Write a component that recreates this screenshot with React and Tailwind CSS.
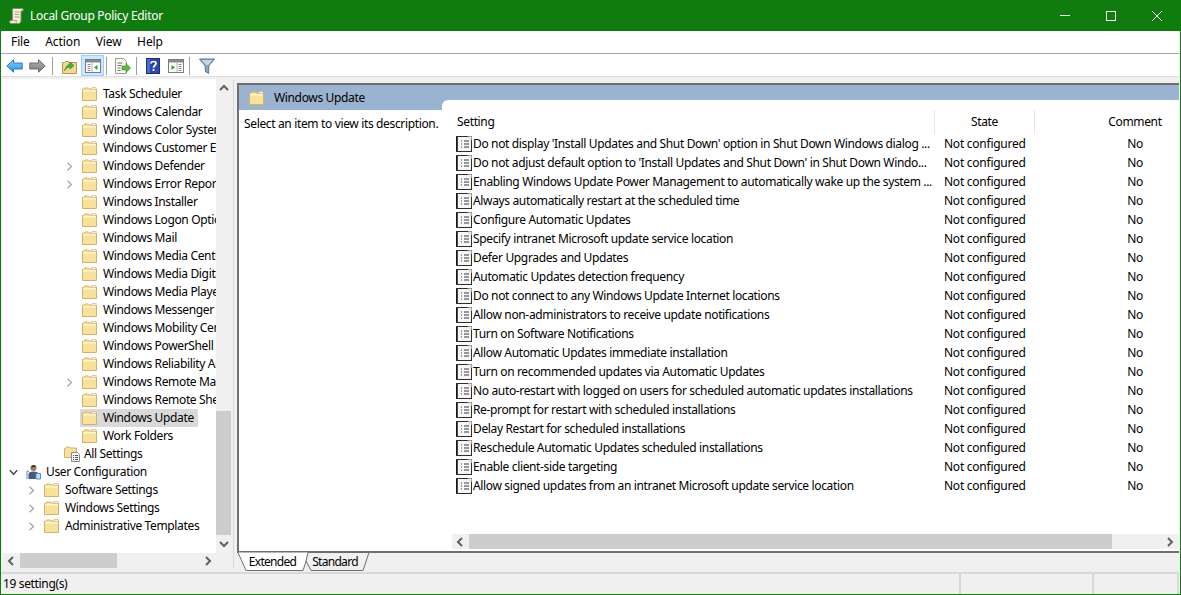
const treeRows = [
  { label: 'Task Scheduler', indent: 'pl-[61px]' },
  { label: 'Windows Calendar', indent: 'pl-[61px]' },
  { label: 'Windows Color System', indent: 'pl-[61px]' },
  { label: 'Windows Customer Experience', indent: 'pl-[61px]' },
  { label: 'Windows Defender', indent: 'pl-[61px]', chevron: 'right' },
  { label: 'Windows Error Reporting', indent: 'pl-[61px]', chevron: 'right' },
  { label: 'Windows Installer', indent: 'pl-[61px]' },
  { label: 'Windows Logon Options', indent: 'pl-[61px]' },
  { label: 'Windows Mail', indent: 'pl-[61px]' },
  { label: 'Windows Media Center', indent: 'pl-[61px]' },
  { label: 'Windows Media Digital', indent: 'pl-[61px]' },
  { label: 'Windows Media Player', indent: 'pl-[61px]' },
  { label: 'Windows Messenger', indent: 'pl-[61px]' },
  { label: 'Windows Mobility Center', indent: 'pl-[61px]' },
  { label: 'Windows PowerShell', indent: 'pl-[61px]' },
  { label: 'Windows Reliability Analysis', indent: 'pl-[61px]' },
  { label: 'Windows Remote Management', indent: 'pl-[61px]', chevron: 'right' },
  { label: 'Windows Remote Shell', indent: 'pl-[61px]' },
  { label: 'Windows Update', indent: 'pl-[61px]', selected: true },
  { label: 'Work Folders', indent: 'pl-[61px]' },
  { label: 'All Settings', indent: 'pl-[43px]', icon: 'settings' },
  { label: 'User Configuration', indent: 'pl-[5px]', icon: 'user', chevron: 'down' },
  { label: 'Software Settings', indent: 'pl-[23px]', chevron: 'right' },
  { label: 'Windows Settings', indent: 'pl-[23px]', chevron: 'right' },
  { label: 'Administrative Templates', indent: 'pl-[23px]', chevron: 'right' },
];

const settings = [
  "Do not display 'Install Updates and Shut Down' option in Shut Down Windows dialog ...",
  "Do not adjust default option to 'Install Updates and Shut Down' in Shut Down Windo...",
  'Enabling Windows Update Power Management to automatically wake up the system ...',
  'Always automatically restart at the scheduled time',
  'Configure Automatic Updates',
  'Specify intranet Microsoft update service location',
  'Defer Upgrades and Updates',
  'Automatic Updates detection frequency',
  'Do not connect to any Windows Update Internet locations',
  'Allow non-administrators to receive update notifications',
  'Turn on Software Notifications',
  'Allow Automatic Updates immediate installation',
  'Turn on recommended updates via Automatic Updates',
  'No auto-restart with logged on users for scheduled automatic updates installations',
  'Re-prompt for restart with scheduled installations',
  'Delay Restart for scheduled installations',
  'Reschedule Automatic Updates scheduled installations',
  'Enable client-side targeting',
  'Allow signed updates from an intranet Microsoft update service location',
];

const Folder = () => (
  <svg width="15" height="14" viewBox="0 0 15 14" className="shrink-0">
    <path d="M0.500 2.500h1l1-1.500h4l1 1h7v11.500h-14z" fill="#f8e29b" stroke="#d0b36a" />
    <rect x="1" y="3" width="13" height="1.500" fill="#fff3c9" />
    <rect x="10" y="0.500" width="4" height="2" fill="#fdf8e4" stroke="#c9b27a" strokeWidth="0.600" />
  </svg>
);

const SettingsIcon = () => (
  <svg width="17" height="16" viewBox="0 0 17 16" className="shrink-0">
    <path d="M0.500 2.500h1l1-1.500h3l1 1h6v9.500h-12z" fill="#f8e29b" stroke="#d0b36a" />
    <path d="M7.500 6.500h6l2 2v7h-8z" fill="#f7f7f7" stroke="#8a8a8a" />
    <path d="M9 9.500h1M11 9.500h3M9 11.500h1M11 11.500h3M9 13.500h1M11 13.500h3" stroke="#505050" />
  </svg>
);

const UserIcon = () => (
  <svg width="15" height="16" viewBox="0 0 15 16" className="shrink-0">
    <circle cx="7.500" cy="4" r="3" fill="#a5765a" />
    <path d="M5 3.500c.5-2.500 4-3 5.500-.5-1.500-.5-3.500 0-5.500.5z" fill="#2e2a2a" />
    <path d="M2.500 15v-5c0-1.500 2-2.500 5-2.500s5 1 5 2.500v5z" fill="#46597a" />
    <path d="M1 7v8M3 8l-2-1.500M10 9.500h4.500v5.500H10z" stroke="#4f8fd0" fill="#c4def3" />
  </svg>
);

const Chevron = ({ dir }) => (
  <span className="w-[12px] h-[18px] mr-[5px] shrink-0 flex items-center justify-center">
    {dir === 'right' && (
      <svg width="7" height="9" viewBox="0 0 7 9">
        <path d="M1.500 .8l4 3.700-4 3.700" fill="none" stroke="#a6a6a6" strokeWidth="1.300" />
      </svg>
    )}
    {dir === 'down' && (
      <svg width="9" height="7" viewBox="0 0 9 7">
        <path d="M.8 1.200l3.700 4 3.700-4" fill="none" stroke="#404040" strokeWidth="1.300" />
      </svg>
    )}
  </span>
);

const TreeRow = ({ row }) => (
  <div className={`h-[18px] flex items-center whitespace-nowrap ${row.indent}`}>
    <Chevron dir={row.chevron} />
    <div className={`flex items-center h-[18px] pl-[2px] pr-[4px] ${row.selected ? 'bg-[#d9d9d9]' : ''}`}>
      {row.icon === 'settings' ? <SettingsIcon /> : row.icon === 'user' ? <UserIcon /> : <Folder />}
      <span className={row.icon === 'settings' ? 'ml-[3px]' : row.icon === 'user' ? 'ml-[5px]' : 'ml-[6px]'}>{row.label}</span>
    </div>
  </div>
);

const PolicyIcon = () => (
  <svg width="16" height="16" viewBox="0 0 16 16" className="shrink-0">
    <rect x="0.500" y="0.500" width="15" height="15" fill="#f6f6f6" stroke="#2e2e2e" />
    <path d="M1 1v14" stroke="#101010" strokeWidth="1.500" />
    <path d="M5 5h1M8 5h5M5 8h1M8 8h5M5 11h1M8 11h5" stroke="#3a3a3a" />
    <path d="M12 .5h3.500V4z" fill="#fff" stroke="#a8a8a8" strokeWidth=".6" />
  </svg>
);

const ScrollArrow = ({ dir }) => {
  const paths = {
    up: 'M1 6l4-4 4 4',
    down: 'M1 2l4 4 4-4',
    left: 'M6 1L2 5l4 4',
    right: 'M2 1l4 4-4 4',
  };
  return (
    <svg width="10" height="10" viewBox="0 0 10 10" className={dir === 'left' || dir === 'right' ? '' : 'translate-y-[1px]'}>
      <path d={paths[dir]} fill="none" stroke="#606060" strokeWidth="2" />
    </svg>
  );
};

const ToolSep = () => <div className="w-px h-[18px] bg-[#a0a0a0]" />;

const BackIcon = () => (
  <svg width="17" height="14" viewBox="0 0 17 14">
    <defs>
      <linearGradient id="back" x1="0" y1="0" x2="0" y2="1">
        <stop offset="0" stopColor="#8fd6fb" />
        <stop offset="1" stopColor="#1f8fe0" />
      </linearGradient>
    </defs>
    <path d="M.8 7L7.500 .8v3.200h8.700v6H7.500v3.200z" fill="url(#back)" stroke="#2a79c4" />
  </svg>
);

const ForwardIcon = () => (
  <svg width="17" height="14" viewBox="0 0 17 14">
    <defs>
      <linearGradient id="fwd" x1="0" y1="0" x2="0" y2="1">
        <stop offset="0" stopColor="#b4b4b4" />
        <stop offset="1" stopColor="#787878" />
      </linearGradient>
    </defs>
    <path d="M16.200 7L9.500 .8v3.200H.8v6h8.700v3.200z" fill="url(#fwd)" stroke="#6a6a6a" />
  </svg>
);

const UpIcon = () => (
  <svg width="15" height="16" viewBox="0 0 15 16">
    <path d="M.5 4.500h2l1-1h3v1h8v11H.5z" fill="#f3d88a" stroke="#b4975a" />
    <path d="M2 13l3-5c1-1.500 2-2 3-2V4l4 3.500L8 11V9c-2 0-4 1.500-6 4z" fill="#49ad3a" stroke="#2d8126" strokeWidth=".6" />
  </svg>
);

const PaneIcon = ({ left }) => (
  <svg width="16" height="14" viewBox="0 0 16 14">
    <rect x=".5" y=".5" width="15" height="13" fill="#fff" stroke="#7c7c7c" />
    <rect x="1" y="1" width="14" height="2.500" fill="#808a94" />
    {left ? (
      <>
        <path d="M2.500 5.500h3M2.500 7.500h3M2.500 9.500h3M2.500 11.500h3" stroke="#8a8a8a" />
        <path d="M7 4v9" stroke="#b0b0b0" />
        <path d="M12.500 6v5L9 8.500z" fill="#2a9d3a" />
      </>
    ) : (
      <>
        <path d="M10.500 5.500h3M10.500 7.500h3M10.500 9.500h3M10.500 11.500h3" stroke="#8a8a8a" />
        <path d="M9 4v9" stroke="#b0b0b0" />
        <path d="M3.500 6v5L7 8.500z" fill="#2a9d3a" />
      </>
    )}
  </svg>
);

const ExportIcon = () => (
  <svg width="16" height="16" viewBox="0 0 16 16">
    <path d="M.5.5h8l3 3v12H.5z" fill="#fffbea" stroke="#9a9a9a" />
    <path d="M2.500 5h5M2.500 7.500h4M2.500 10h3M2.500 12.500h3" stroke="#707070" />
    <path d="M7 8h4V5.500L15.500 10 11 14.500V12H7z" fill="#5cb848" stroke="#36852a" strokeWidth=".6" />
  </svg>
);

const HelpIcon = () => (
  <svg width="14" height="16" viewBox="0 0 14 16">
    <rect x=".5" y=".5" width="13" height="15" fill="#2b4aa8" stroke="#1b2f78" />
    <path d="M1 1h3v14H1z" fill="#4a6cc8" />
    <path d="M5 5.500C5 2.800 10 2.800 10 5.500c0 2-2.500 2-2.500 4.300M7.500 11v2" fill="none" stroke="#fff" strokeWidth="1.700" />
  </svg>
);

const FilterIcon = () => (
  <svg width="16" height="16" viewBox="0 0 16 16">
    <path d="M.5 1h15L9.700 8v7.500l-3.400-2V8z" fill="#8fa7bb" stroke="#5c7488" />
    <path d="M2.500 2h11L9 7H7z" fill="#c6d6e2" />
  </svg>
);

const TitleScroll = () => (
  <svg width="15" height="16" viewBox="0 0 15 16">
    <path d="M4 .5h9c1.300 0 1.800 1.700.5 2.500H12v9c0 2-1 3.500-2.500 3.500H1.800c-1.500 0-1.700-3 0-3H3.500V2C3.500 1 3.800.5 4 .5z" fill="#f5efd8" stroke="#8f8a70" />
    <path d="M5.500 4h5M5.500 6.500h5M5.500 9h5" stroke="#a8a28a" />
    <path d="M2 12.500h6c-.8.800-.8 2.200 0 3" fill="#e3dcbf" stroke="#8f8a70" strokeWidth=".6" />
  </svg>
);

const Tab = ({ label, active }) => (
  <div className={`relative h-[19px] flex items-center justify-center tracking-[-0.7px] ${active ? 'w-[69px] -mr-[2px]' : 'w-[65px] pr-[5px]'}`}>
    <svg width={active ? 71 : 65} height="19" viewBox={active ? '0 0 71 19' : '0 0 65 19'} className="absolute inset-0">
      {active ? (
        <path d="M0 0.500L8 18.500H65L71 0.500" fill="#fff" stroke="#6c6c6c" />
      ) : (
        <path d="M3 .5H64L58 18.500H6L1 9z" fill="#f0f0f0" stroke="#6c6c6c" />
      )}
    </svg>
    <span className="relative">{label}</span>
  </div>
);

export default function App() {
  return (
    <div
      className="w-[1181px] h-[595px] flex flex-col bg-[#f0f0f0] border-x border-b border-[#107c10] overflow-hidden text-[12px] text-black tracking-[-0.35px]"
      style={{ fontFamily: '"Noto Sans", sans-serif' }}
    >
      {/* Title bar */}
      <div className="h-[31px] shrink-0 bg-[#107c10] text-white flex items-center pl-[8px]">
        <TitleScroll />
        <span className="ml-[6px] pt-[1px] tracking-[-0.3px]">Local Group Policy Editor</span>
        <div className="ml-auto flex items-center">
          <div className="w-[46px] flex justify-center">
            <div className="w-[10px] h-px bg-white" />
          </div>
          <div className="w-[46px] flex justify-center">
            <div className="w-[10px] h-[10px] border border-white" />
          </div>
          <div className="w-[46px] flex justify-center">
            <svg width="10" height="10" viewBox="0 0 10 10">
              <path d="M0 0l10 10M10 0L0 10" stroke="#fff" />
            </svg>
          </div>
        </div>
      </div>

      {/* Menu */}
      <div className="h-[23px] mr-px shrink-0 bg-white border-b border-[#a8a8b4] flex items-center pl-[10px] gap-[15.5px] tracking-[-0.1px]">
        <span>File</span>
        <span>Action</span>
        <span>View</span>
        <span>Help</span>
      </div>

      {/* Toolbar */}
      <div className="h-[23px] shrink-0 mr-px bg-white border-b border-[#e0e0e0] flex items-center pl-[5px] pt-[1px]">
        <BackIcon />
        <div className="ml-[6px]"><ForwardIcon /></div>
        <div className="ml-[6px]"><ToolSep /></div>
        <div className="ml-[9px]"><UpIcon /></div>
        <div className="ml-[4px] w-[23px] h-[21px] flex items-center justify-center bg-[#cce8ff] border border-[#99d1ff]"><PaneIcon left /></div>
        <div className="ml-[2px]"><ToolSep /></div>
        <div className="ml-[8px]"><ExportIcon /></div>
        <div className="ml-[5px]"><ToolSep /></div>
        <div className="ml-[9px]"><HelpIcon /></div>
        <div className="ml-[8px]"><PaneIcon /></div>
        <div className="ml-[5px]"><ToolSep /></div>
        <div className="ml-[9px]"><FilterIcon /></div>
      </div>

      {/* Panes */}
      <div className="flex-1 min-h-0 flex pt-[2px] pl-px">
        <div className="w-[230px] shrink-0 flex flex-col h-[489px]">
          <div className="flex-1 min-h-0 flex">
            <div className="w-[214px] bg-white pt-[6px] overflow-hidden">
              {treeRows.map((row) => (
                <TreeRow key={row.label} row={row} />
              ))}
            </div>
            <div className="w-[15px] bg-[#f0f0f0] flex flex-col items-center">
              <div className="h-[17px] flex items-center"><ScrollArrow dir="up" /></div>
              <div className="h-[315px]" />
              <div className="w-full h-[124px] bg-[#cdcdcd]" />
              <div className="h-[17px] flex items-center"><ScrollArrow dir="down" /></div>
            </div>
          </div>
          <div className="h-[15px] w-[214px] ml-px flex items-center">
            <div className="w-[17px] flex justify-center"><ScrollArrow dir="left" /></div>
            <div className="w-[97px] h-full bg-[#cdcdcd]" />
            <div className="flex-1" />
            <div className="w-[17px] flex justify-center"><ScrollArrow dir="right" /></div>
          </div>
        </div>

        <div className="w-px h-[489px] ml-[1px] bg-[#d8d8d8]" />

        <div className="flex-1 min-w-0 flex flex-col pl-[4px] mr-[1px]">
          <div className="h-[470px] flex border-l-2 border-t-2 border-b-2 border-[#707070] mt-[4px] bg-white -ml-px">
            {/* Description column */}
            <div className="w-[203px] shrink-0 flex flex-col">
              <div className="h-[25px] bg-[#9ab3d0] flex items-center pl-[10px]">
                <Folder />
                <span className="ml-[10px]">Windows Update</span>
              </div>
              <div className="pl-[5px] pt-[5px] whitespace-nowrap">Select an item to view its description.</div>
            </div>

            {/* Settings list */}
            <div className="flex-1 min-w-0 bg-[#9ab3d0] overflow-hidden">
              <div className="mt-[15px] h-[451px] pb-[2px] bg-white rounded-tl-[6px] flex flex-col">
                <div className="h-[24px] mt-[10px] flex items-center shrink-0">
                  <div className="w-[493px] shrink-0 h-full pl-[15px] flex items-center border-r border-[#e5e5e5]">Setting</div>
                  <div className="w-[100px] shrink-0 h-full flex items-center justify-center border-r border-[#e5e5e5]">State</div>
                  <div className="w-[200px] shrink-0 h-full flex items-center justify-center">Comment</div>
                </div>
                <div className="flex-1 min-h-0">
                  {settings.map((name) => (
                    <div key={name} className="h-[19px] flex items-center whitespace-nowrap">
                      <div className="w-[493px] shrink-0 pl-[14px] flex items-center overflow-hidden">
                        <PolicyIcon />
                        <span className="ml-[1px]">{name}</span>
                      </div>
                      <div className="w-[100px] shrink-0 pl-[9px] tracking-[-0.25px]">Not configured</div>
                      <div className="w-[200px] shrink-0 text-center">No</div>
                    </div>
                  ))}
                </div>
                <div className="h-[15px] flex items-center shrink-0 ml-[10px] bg-[#f0f0f0]">
                  <div className="w-[17px] flex justify-center"><ScrollArrow dir="left" /></div>
                  <div className="w-[643px] h-full bg-[#cdcdcd]" />
                  <div className="flex-1" />
                  <div className="w-[17px] flex justify-center"><ScrollArrow dir="right" /></div>
                </div>
              </div>
            </div>
          </div>

          <div className="h-[19px] flex -mt-[1px]">
            <Tab label="Extended" active />
            <Tab label="Standard" />
          </div>
        </div>
      </div>

      {/* Status bar */}
      <div className="h-[22px] shrink-0 mr-px border-t-2 border-[#d9d9d9] flex items-center">
        <div className="w-[958px] pl-[2px]">19 setting(s)</div>
        <div className="w-[133px] h-full border-l-2 border-[#d9d9d9]" />
        <div className="flex-1 h-full border-l-2 border-r-2 border-[#d9d9d9]" />
      </div>
    </div>
  );
}
